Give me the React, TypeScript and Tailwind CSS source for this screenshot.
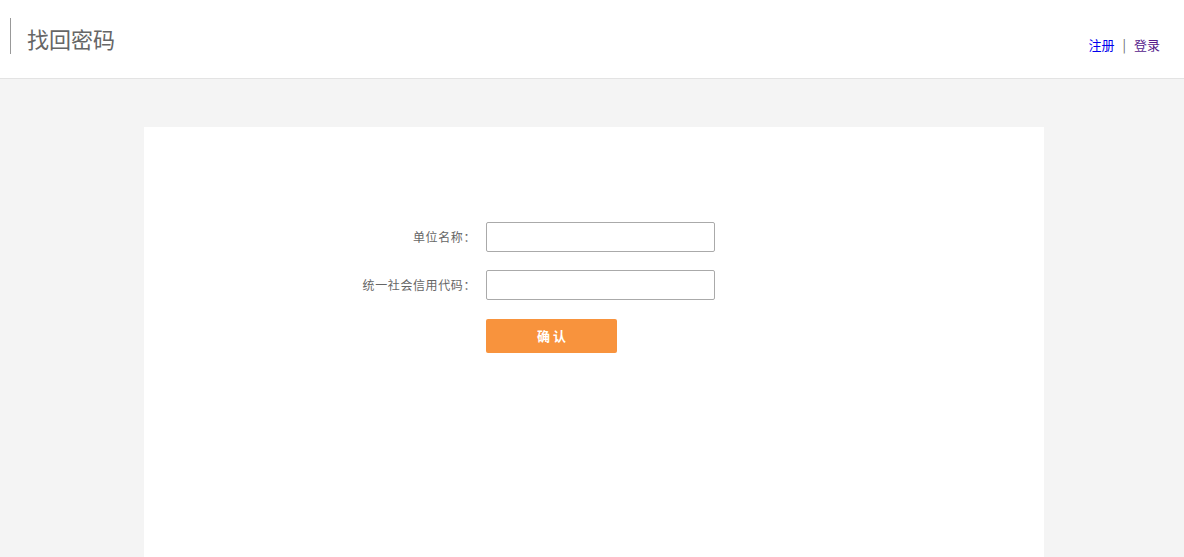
import React, { useState } from 'react';

const App: React.FC = () => {
  const [name, setName] = useState('');
  const [code, setCode] = useState('');

  return (
    <div
      className="min-h-screen bg-[#f4f4f4] text-[#666]"
      style={{ fontFamily: '"Microsoft YaHei", "Noto Sans CJK SC", sans-serif' }}
    >
      <header className="h-[79px] bg-white border-b border-[#e3e3e3] flex items-start justify-between">
        <div className="mt-[18px] ml-[10px] border-l border-[#999] h-[36px] pl-[16px] flex items-center">
          <h1 className="text-[22px] leading-none text-[#666] mt-[4px]">找回密码</h1>
        </div>
        <nav className="mt-[36px] mr-[24px] flex items-center text-[13px] leading-[18px]">
          <a href="#" className="text-[#0000ee]">注册</a>
          <span className="mx-[8px] text-[#666]">|</span>
          <a href="#" className="text-[#551a8b]">登录</a>
        </nav>
      </header>

      <main className="pt-[48px]">
        <div className="ml-[144px] w-[900px] h-[430px] bg-white pt-[95px] pl-[196px]">
          <div className="flex items-center h-[30px]">
            <label className="w-[136px] text-right text-[12px] tracking-[0.6px] text-[#666]">单位名称：</label>
            <input
              value={name}
              onChange={(e) => setName(e.target.value)}
              className="ml-[10px] w-[229px] h-[30px] border border-[#aaa] rounded-[2px] px-2 text-[12px] outline-none"
            />
          </div>
          <div className="flex items-center h-[30px] mt-[18px]">
            <label className="w-[136px] text-right text-[12px] tracking-[0.6px] text-[#666]">统一社会信用代码：</label>
            <input
              value={code}
              onChange={(e) => setCode(e.target.value)}
              className="ml-[10px] w-[229px] h-[30px] border border-[#aaa] rounded-[2px] px-2 text-[12px] outline-none"
            />
          </div>
          <div className="flex mt-[19px]">
            <div className="w-[136px]" />
            <button className="ml-[10px] w-[131px] h-[34px] bg-[#f8933d] rounded-[2px] text-white text-[13px] font-bold">
              确 认
            </button>
          </div>
        </div>
      </main>
    </div>
  );
};

export default App;
